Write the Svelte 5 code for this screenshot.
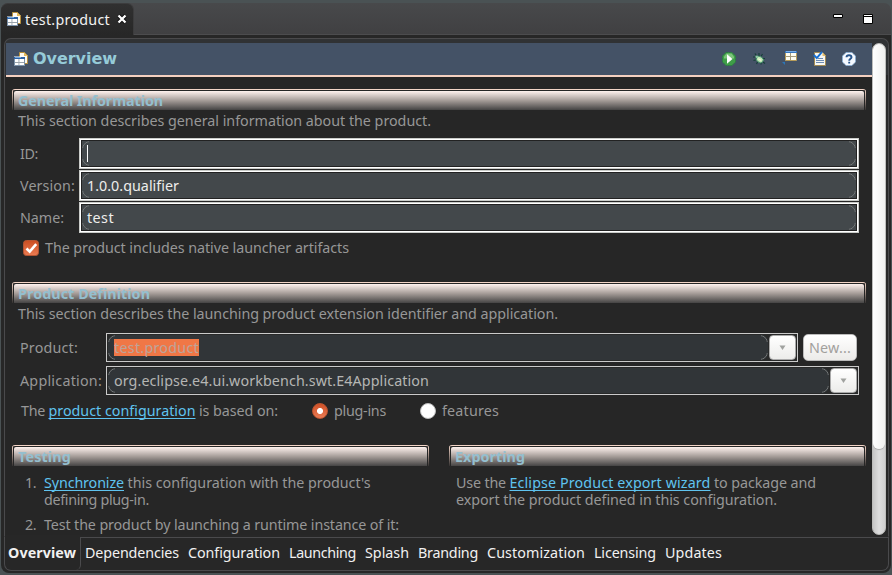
<script>
  const pages = [
    ['Overview', 68], ['Dependencies', 94], ['Configuration', 92], ['Launching', 67],
    ['Splash', 44], ['Branding', 60], ['Customization', 98], ['Licensing', 62], ['Updates', 57]
  ];
  const fields = [['ID:', 18, '', 0], ['Version:', 55, '1.0.0.qualifier', 92], ['Name:', 44, 'test', 27]];

  // Tracks a label out or in so it fills its measured column.
  function fit(node, width) {
    const natural = node.getBoundingClientRect().width;
    node.style.letterSpacing = (width - natural) / node.textContent.length + 'px';
    node.style.width = width + 'px';
  }
</script>

{#snippet t(text, w, cls = '')}<span class="t {cls}" use:fit={w}>{text}</span>{/snippet}

{#snippet productIcon()}
  <svg class="picon" width="14" height="14" viewBox="0 0 14 14">
    <path d="M5.500.5h5l3 3v8h-8z" fill="#fffaf0" stroke="#b8903c" />
    <path d="M10 .5v3.500h3.500z" fill="#e4b959" />
    <path d="M0 4.500h11v9H0z" fill="#fff" />
    <path d="M.5 6v7.500h10V6" fill="none" stroke="#7d93aa" />
    <path d="M0 5h11v2H0z" fill="#2e62a4" /><path d="M1 5h6v1H1z" fill="#72a8e0" />
    <path d="M1 10h9v.9H1zM4.500 7h.9v6h-.9z" fill="#9aa4ac" />
  </svg>
{/snippet}

{#snippet head(title, w)}
  <div class="head"><div class="shade">{@render t(title, w, 'bold')}</div></div>
{/snippet}

{#snippet arrow()}
  <div class="arrow"><svg width="7" height="5" viewBox="0 0 7 5"><path d="M.5.5h6L3.500 5z" fill="#a0a29f" /></svg></div>
{/snippet}

<div class="window">
  <div class="tabbar">
    <div class="tab">
      {@render productIcon()}
      {@render t('test.product', 85)}
      <svg class="close" width="10" height="10" viewBox="0 0 10 10">
        <path d="M1.500 1.500l7 7M8.500 1.500l-7 7" stroke="#111" stroke-width="4" />
        <path d="M1.500 1.500l7 7M8.500 1.500l-7 7" stroke="#fff" stroke-width="2.300" />
      </svg>
    </div>
    <div class="winbtns">
      <svg width="10" height="4"><path d="M.5.5h9v3h-9z" fill="#fff" stroke="#000" /></svg>
      <svg width="10" height="10"><path d="M.5.5h9v9h-9z" fill="#fff" stroke="#000" /><path d="M1 2.500h8" stroke="#000" /></svg>
    </div>
  </div>

  <div class="editor">
    <div class="body">
      <div class="form">
        <div class="title">
          {@render productIcon()}
          {@render t('Overview', 84, 'heading')}
          <div class="tools">
            <svg width="14" height="14" viewBox="0 0 14 14">
              <path d="M4 .5h6L13.500 4v6L10 13.500H4L.5 10V4z" fill="#3f9e48" stroke="#2a8040" stroke-dasharray="2 .7" />
              <path d="M4.500 1.500h5l2.500 3v2H2v-2z" fill="#7cc47a" /><path d="M5 2.200L10.500 7 5 11.800z" fill="#fff" />
            </svg>
            <svg width="14" height="14" viewBox="0 0 14 14">
              <path d="M3 1.500l2 3M7 1v3.500M1 5h3.500M1.500 8.500L5 7.500M4.500 12l1.500-3M9 12.500v-2.500M9 4.500l1.500-2.500M11 6.500h2M11 10l2 1.500" stroke="#173f39" stroke-width="1.200" />
              <ellipse cx="7.800" cy="7.500" rx="3.700" ry="2.900" transform="rotate(35 7.800 7.500)" fill="#c2e5b5" stroke="#3e8c67" stroke-width=".9" />
              <circle cx="4.700" cy="4.700" r="1.300" fill="#8cc9a2" /><path d="M6.300 6.800l3 1.700" stroke="#f1fbd8" stroke-width="1.200" />
            </svg>
            <svg width="15" height="15" viewBox="0 0 15 15">
              <path d="M3.500.5h11v9h-11z" fill="#fffdf0" stroke="#b69b58" />
              <path d="M3 0h12v2H3z" fill="#3976bd" /><path d="M4 0h10v1H4z" fill="#79aee6" />
              <path d="M4 5.500h10M8.500 2v7" stroke="#a59b7c" /><path d="M0 11h3v3z" fill="#2c76b8" />
            </svg>
            <svg width="13" height="15" viewBox="0 0 13 15">
              <path d="M1.500 1.500h8l3 3v10h-11z" fill="#f7f7f2" stroke="#a38a53" /><path d="M9.500 1v4h3" fill="#e3bd6c" />
              <path d="M5 7.500h5M3 9.500h8M3 11.500h8" stroke="#6d8bb4" />
              <path d="M.8 4l3 3L9 .8" fill="none" stroke="#186fd2" stroke-width="1.900" />
            </svg>
            <svg width="14" height="14" viewBox="0 0 14 14">
              <path d="M4 .5h6L13.500 4v6L10 13.500H4L.5 10V4z" fill="#f5f9ff" stroke="#8ab0d6" stroke-dasharray="2 .7" />
              <path d="M4.500 5.200C4.500 2.500 9.500 2.500 9.500 5.200 9.500 6.700 7.200 6.700 7.200 8.700M7.200 9.800v1.800" fill="none" stroke="#28558b" stroke-width="1.900" />
            </svg>
          </div>
        </div>

        <div class="content">
          <section class="general">
            {@render head('General Information', 145)}
            <p class="desc">{@render t('This section describes general information about the product.', 413)}</p>
            <div class="fields">
              {#each fields as [label, lw, value, vw]}
                <label>
                  <span class="lab">{@render t(label, lw)}</span>
                  <span class="input"><span class="fill">
                    {#if value}{@render t(value, vw)}{:else}<i class="caret"></i>{/if}
                  </span></span>
                </label>
              {/each}
            </div>
            <div class="checkrow">
              <svg width="16" height="16" viewBox="0 0 16 16">
                <defs><linearGradient id="orange" x2="0" y2="1"><stop stop-color="#ca4d22" /><stop offset="1" stop-color="#eb7c52" /></linearGradient></defs>
                <rect x=".5" y=".5" width="15" height="15" rx="3" fill="url(#orange)" stroke="#b45432" />
                <path d="M3.500 8.500l3.200 3.200 6.500-7.500" fill="none" stroke="#fff" stroke-width="2.600" />
              </svg>
              {@render t('The product includes native launcher artifacts', 304)}
            </div>
          </section>

          <section class="definition">
            {@render head('Product Definition', 132)}
            <p class="desc">{@render t('This section describes the launching product extension identifier and application.', 540)}</p>
            <div class="comborow">
              <span class="lab">{@render t('Product:', 58)}</span>
              <div class="combo"><div class="fill">{@render t('test.product', 85, 'selected')}</div>{@render arrow()}</div>
              <button>{@render t('New...', 42)}</button>
            </div>
            <div class="comborow">
              <span class="lab">{@render t('Application:', 82)}</span>
              <div class="combo"><div class="fill">{@render t('org.eclipse.e4.ui.workbench.swt.E4Application', 315)}</div>{@render arrow()}</div>
            </div>
            <div class="radiorow">
              <div class="run based">{@render t('The', 24)}{@render t('product configuration', 147, 'link')}{@render t('is based on:', 79)}</div>
              <div class="radio plug"><i class="dot on"></i>{@render t('plug-ins', 52)}</div>
              <div class="radio"><i class="dot"></i>{@render t('features', 57)}</div>
            </div>
          </section>

          <div class="columns">
            <section>
              {@render head('Testing', 53)}
              <div class="item"><span class="num">{@render t('1.', 11)}</span><div>
                <div class="run">{@render t('Synchronize', 80, 'link')}{@render t("this configuration with the product's", 243)}</div>
                <div class="run">{@render t('defining plug-in.', 105)}</div>
              </div></div>
              <div class="item"><span class="num">{@render t('2.', 11)}</span>
                <div class="run">{@render t('Test the product by launching a runtime instance of it:', 355)}</div>
              </div>
            </section>
            <section>
              {@render head('Exporting', 70)}
              <div class="export">
                <div class="run">{@render t('Use the', 50)}{@render t('Eclipse Product export wizard', 201, 'link')}{@render t('to package and', 102)}</div>
                <div class="run">{@render t('export the product defined in this configuration.', 321)}</div>
              </div>
            </section>
          </div>
        </div>
      </div>
      <div class="scroll"><div class="thumb"></div></div>
    </div>

    <nav>
      {#each pages as [name, w], i}
        <div class:active={i === 0}>{@render t(name, w, i === 0 ? 'bold' : '')}</div>
      {/each}
    </nav>
  </div>
</div>

<style>
  :global(body) { background: #4c5456; overflow: hidden; }
  * { box-sizing: border-box; }
  .window {
    width: 892px; height: 575px; padding: 3px 1px 2px;
    display: flex; flex-direction: column;
    background: #4a5254; color: #979797;
    font: 14.3px/20px "Noto Sans", sans-serif;
  }
  svg { display: block; flex: none; }
  .t { display: inline-block; white-space: nowrap; flex: none; }
  .bold { font-weight: 700; }

  .tabbar {
    height: 32px; flex: none; display: flex; justify-content: space-between;
    background: linear-gradient(#48494b, #404042); border-bottom: 1px solid #4c4c4e;
    border-radius: 7px 7px 0 0;
  }
  .tab {
    width: 133px; height: 32px; padding: 0 0 0 6px; display: flex; align-items: center;
    background: linear-gradient(#303030, #272727); border-radius: 7px 7px 0 0;
    border: 1px solid #3c3c3d; border-width: 1px 1px 0 0; color: #f2f2f2;
  }
  .tab .t { margin-left: 4px; }
  .tab .picon { margin-top: -2px; }
  .close { margin: -1px 0 0 7px; }
  .winbtns { display: flex; gap: 20px; padding: 11px 18px 0 0; }

  .editor {
    flex: 1; min-height: 0; padding: 3px 2px 1px 3px; background: #272727;
    border-radius: 0 0 8px 8px; display: flex; flex-direction: column;
  }
  .body {
    height: 499px; flex: none; display: flex; padding: 4px 1px 3px 1px;
    border: 1px solid #4a4a4c; border-radius: 7px 7px 0 0; background: linear-gradient(#303234, #303234) 0 0/100% 36px no-repeat #272727;
    border-bottom-color: transparent;
  }
  .form { width: 866px; height: 492px; flex: none; overflow: hidden; background: #262626; display: flex; flex-direction: column; }
  .title {
    height: 34px; flex: none; background: #445266;
    display: flex; align-items: center; padding: 0 16px 0 8px;
    border: 0 solid; border-width: 0 0 2px;
    border-image: linear-gradient(#fff 50%, #f4d0c0 50%) 2;
  }
  .heading { font: 700 16px/20px "DejaVu Sans", sans-serif; color: #96cbd8; margin-left: 5px; margin-top: -1px; }
  .tools { margin-left: auto; display: flex; align-items: center; gap: 16px; margin-top: -1px; }
  .title .picon { margin-top: -1px; }

  .content { padding: 12px 6px 0; }
  .head {
    height: 21px; border-top: 1px solid #f3d5c7; border-radius: 3px 3px 0 0; padding: 1px 1px 0;
    background: linear-gradient(#f3d5c7, #353231) 0 0/1px 100% no-repeat,
      linear-gradient(#f3d5c7, #353231) 100% 0/1px 100% no-repeat;
  }
  .shade {
    height: 19px; margin: 0 1px; padding-left: 4px; line-height: 19px; color: #94bfcf;
    background: linear-gradient(#fff2ee, #a59c98 50%, #454444); border-radius: 2px 2px 0 0;
    overflow: hidden;
  }
  .desc { margin: 0; height: 20px; padding: 1px 0 0 6px; display: flex; }
  .fields { margin-top: 8px; display: flex; flex-direction: column; gap: 1px; }
  label { display: flex; height: 31px; align-items: center; padding: 0 7px 0 8px; }
  label .lab { width: 59px; }
  .input {
    flex: 1; height: 31px; border: 1px solid #c9cbc8; padding: 1px; background: #fff; display: flex;
  }
  .input .fill {
    flex: 1; border: 1px solid #222; background: #43484b; color: #eeeeec; display: flex; align-items: center;
    padding-left: 5px; position: relative;
  }
  .fill::after {
    content: ''; position: absolute; inset: 0; border: 1px solid #777a7a; border-radius: 8px;
    mask: linear-gradient(#000, #000) 0 0/7px 7px no-repeat, linear-gradient(#000, #000) 100% 0/7px 7px no-repeat,
      linear-gradient(#000, #000) 0 100%/7px 7px no-repeat, linear-gradient(#000, #000) 100% 100%/7px 7px no-repeat;
  }
  .caret { width: 1px; height: 17px; background: #fff; }
  .checkrow { margin-top: 1px; height: 27px; padding-left: 11px; display: flex; align-items: center; gap: 6px; }

  .definition { margin-top: 21px; }
  .comborow { display: flex; align-items: center; height: 29px; padding: 0 7px 0 8px; margin-top: 4px; }
  .desc + .comborow { margin-top: 10px; }
  .comborow .lab { width: 86px; }
  .combo { flex: 1; height: 29px; border: 1px solid #cacaca; display: flex; align-items: center; padding: 0 1px; background: #282929; }
  .combo .fill {
    flex: 1; height: 25px; padding-left: 6px; background: #313538; color: #b5b6b4;
    display: flex; align-items: center; border-radius: 7px; margin-right: 1px; position: relative;
  }
  .selected { height: 17px; line-height: 17px; background: #f07746; color: #bda49a; }
  .arrow {
    width: 27px; height: 25px; border: 1px solid #aaa; border-radius: 4px;
    background: linear-gradient(#fff, #ececea); display: flex; align-items: center; justify-content: center;
  }
  button {
    width: 54px; height: 27px; margin: 0 2px 0 5px; padding: 0; font: inherit; color: #a2a09d;
    border: 1px solid #bbb; border-radius: 5px; background: linear-gradient(#fff, #ecebe9);
  }
  .radiorow { height: 31px; padding-left: 9px; display: flex; align-items: center; }
  .based { width: 291px; }
  .run { display: flex; gap: 3.5px; line-height: 17px; height: 17px; }
  .link {
    color: #5fc3ef; text-decoration: underline; text-decoration-thickness: 1px;
    text-underline-offset: 2px; text-decoration-skip-ink: none;
  }
  .radio { display: flex; align-items: center; gap: 6px; }
  .plug { width: 108px; }
  .dot { width: 16px; height: 16px; border-radius: 50%; background: #fff; border: 1px solid #bbb; }
  .dot.on { background: radial-gradient(circle, #fff 0 2.700px, transparent 3.300px), linear-gradient(#cf5128, #e97b54); border-color: #bd5530; }

  .columns { display: flex; gap: 20px; margin-top: 19px; }
  .columns section { flex: 1; }
  .item { display: flex; margin-top: 8px; padding-left: 13px; line-height: 17px; }
  .num { width: 19px; }
  .export { padding: 8px 0 0 7px; }

  .scroll {
    width: 14px; height: 492px; flex: none; border: 1px solid #bdbdbb; border-radius: 7px;
    background: linear-gradient(90deg, #c6c6c6, #dedede 50%, #d0d0d0); overflow: hidden;
  }
  .thumb { height: 405px; border-radius: 7px; background: linear-gradient(90deg, #fff, #f0f0ee); box-shadow: 0 1px 1px #aaa; }

  nav {
    height: 34px; flex: none; display: flex; gap: 9px; color: #f1f1f1;
    border: 1px solid #4a4a4c; border-width: 0 1px 1px; border-radius: 0 0 7px 7px;
    background: #272727;
  }
  nav div { display: flex; align-items: center; height: 33px; padding-bottom: 2px; position: relative; }
  nav .active { width: 76px; margin-right: -5px; padding-left: 3px; border-right: 1px solid #4a4a4c; border-radius: 0 0 5px 0; }
  nav div:not(.active)::before {
    content: ''; position: absolute; left: -9px; right: 0; top: 0; height: 1px; background: #4a4a4c;
  }
  nav div:nth-child(2)::before { left: -4px; }
  nav div:last-child { flex: 1; }
</style>
